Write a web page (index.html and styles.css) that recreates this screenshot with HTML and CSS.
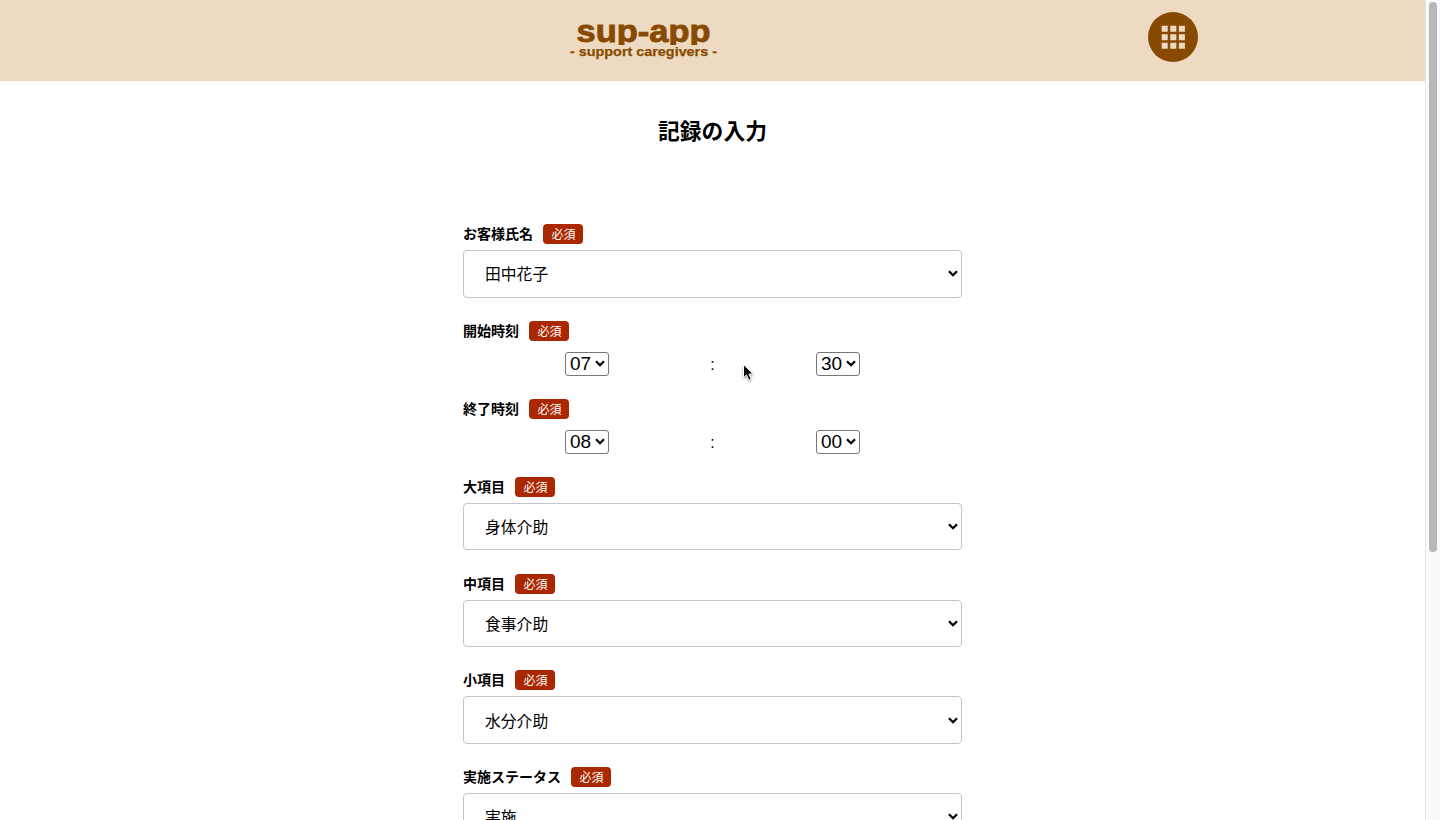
FILE: index.html
```html
<!DOCTYPE html>
<html lang="ja">
<head>
<meta charset="utf-8">
<title>sup-app</title>
<link rel="stylesheet" href="styles.css">
</head>
<body>
<div class="page">
  <header class="header">
    <svg class="logo" width="150" height="50" viewBox="0 0 150 50" aria-label="sup-app">
      <clipPath id="name-clip"><path d="M0 0h150v28H0z"/></clipPath>
      <g clip-path="url(#name-clip)"><text class="logo-name" x="7.5" y="25" textLength="134" lengthAdjust="spacingAndGlyphs">sup-app</text></g>
      <text class="logo-sub" x="1" y="38.5" textLength="147" lengthAdjust="spacingAndGlyphs">- support caregivers -</text>
    </svg>
    <svg class="menu" width="50" height="50" viewBox="0 0 50 50">
      <circle cx="25" cy="25" r="25" fill="#884a00"/>
      <path fill="#eedac2" d="M13.7 13.7h6v6h-6zM22.3 13.7h6v6h-6zM30.9 13.7h6v6h-6zM13.7 22.2h6v6h-6zM22.3 22.2h6v6h-6zM30.9 22.2h6v6h-6zM13.7 30.7h6v6h-6zM22.3 30.7h6v6h-6zM30.9 30.7h6v6h-6z"/>
    </svg>
  </header>
  <main class="form">
    <h1 class="title">記録の入力</h1>
    <section class="field">
      <div class="label">お客様氏名<span class="badge">必須</span></div>
      <div class="select"><span class="value">田中花子</span><svg class="arrow" viewBox="0 0 10 7"><path d="M1 1.2 5 5.2 9 1.2"/></svg></div>
    </section>
    <section class="field field-time">
      <div class="label">開始時刻<span class="badge">必須</span></div>
      <div class="time"><div class="mini">07<svg class="arrow" viewBox="0 0 10 7"><path d="M1 1.2 5 5.2 9 1.2"/></svg></div><span class="colon">:</span><div class="mini">30<svg class="arrow" viewBox="0 0 10 7"><path d="M1 1.2 5 5.2 9 1.2"/></svg></div></div>
    </section>
    <section class="field field-time">
      <div class="label">終了時刻<span class="badge">必須</span></div>
      <div class="time"><div class="mini">08<svg class="arrow" viewBox="0 0 10 7"><path d="M1 1.2 5 5.2 9 1.2"/></svg></div><span class="colon">:</span><div class="mini">00<svg class="arrow" viewBox="0 0 10 7"><path d="M1 1.2 5 5.2 9 1.2"/></svg></div></div>
    </section>
    <section class="field">
      <div class="label">大項目<span class="badge">必須</span></div>
      <div class="select"><span class="value">身体介助</span><svg class="arrow" viewBox="0 0 10 7"><path d="M1 1.2 5 5.2 9 1.2"/></svg></div>
    </section>
    <section class="field">
      <div class="label">中項目<span class="badge">必須</span></div>
      <div class="select"><span class="value">食事介助</span><svg class="arrow" viewBox="0 0 10 7"><path d="M1 1.2 5 5.2 9 1.2"/></svg></div>
    </section>
    <section class="field">
      <div class="label">小項目<span class="badge">必須</span></div>
      <div class="select"><span class="value">水分介助</span><svg class="arrow" viewBox="0 0 10 7"><path d="M1 1.2 5 5.2 9 1.2"/></svg></div>
    </section>
    <section class="field">
      <div class="label">実施ステータス<span class="badge">必須</span></div>
      <div class="select"><span class="value">実施</span><svg class="arrow" viewBox="0 0 10 7"><path d="M1 1.2 5 5.2 9 1.2"/></svg></div>
    </section>
  </main>
</div>
<div class="scrollbar"><div class="thumb"></div></div>
<svg class="cursor" width="14" height="20" viewBox="0 0 14 20"><path d="M1.5 1.5v13.2l3-2.8 2.3 5.3 2.4-1-2.3-5.2h4.3z"/></svg>
</body>
</html>
```
FILE: styles.css
```css
* { box-sizing: border-box; }
body {
  margin: 0;
  height: 820px;
  display: flex;
  overflow: hidden;
  background: #fff;
  color: #000;
  font-family: "Liberation Sans", "Noto Sans CJK JP", sans-serif;
}
.page { flex: 1; height: 820px; overflow: hidden; }
.header {
  height: 81px;
  padding: 12px 227px 0 569px;
  display: flex;
  justify-content: space-between;
  align-items: flex-start;
  background: #eedac2;
}
.logo { margin-top: 5px; fill: #884a00; stroke: #884a00; font-weight: bold; }
.logo-name { font-size: 32px; stroke-width: .9px; }
.logo-sub { font-size: 13px; stroke-width: .25px; }
.form { width: 499px; margin: 0 auto; }
.title {
  margin: 33px 0 74px;
  height: 36px;
  line-height: 36px;
  font-size: 21.8px;
  text-align: center;
}
.field { height: 96.8px; }
.field-time { height: 78px; }
.label {
  height: 20px;
  margin-bottom: 6px;
  display: flex;
  align-items: center;
  gap: 10px;
  font-size: 14px;
  line-height: 20px;
  font-weight: bold;
}
.badge {
  width: 40px;
  height: 20px;
  padding: 1px 0 0 1px;
  border-radius: 4px;
  background: #aa2800;
  color: #fff;
  font-size: 12px;
  line-height: 20px;
  font-weight: normal;
  text-align: center;
}
.select {
  height: 47.6px;
  padding: 0 3px 0 21px;
  display: flex;
  align-items: center;
  justify-content: space-between;
  border: 1px solid #c6c6c6;
  border-radius: 4px;
  font-size: 15.8px;
  line-height: 24px;
}
.value { padding-top: 3px; }
.arrow { width: 10px; height: 7px; fill: none; stroke: #000; stroke-width: 2.3; }
.time {
  display: grid;
  grid-template-columns: 248px 3px 248px;
  justify-items: center;
  align-items: center;
  padding-top: 5px;
}
.mini {
  width: 44px;
  height: 24px;
  padding: 0 3px 0 4px;
  display: flex;
  align-items: center;
  justify-content: space-between;
  border: 1px solid #777;
  border-radius: 3px;
  font-size: 19px;
}
.colon { padding-top: 2px; font-size: 16px; }
.scrollbar {
  width: 15px;
  height: 820px;
  padding: 2px 3px;
  border-left: 1px solid #e6e6e6;
  background: #fafafa;
}
.thumb { width: 8px; height: 550px; border-radius: 4px; background: #b8b8b8; }
.cursor {
  position: absolute;
  left: 742px;
  top: 363px;
  fill: #000;
  stroke: #fff;
  stroke-width: 1;
  filter: drop-shadow(0 1px 1px rgba(0, 0, 0, .4));
}
```
